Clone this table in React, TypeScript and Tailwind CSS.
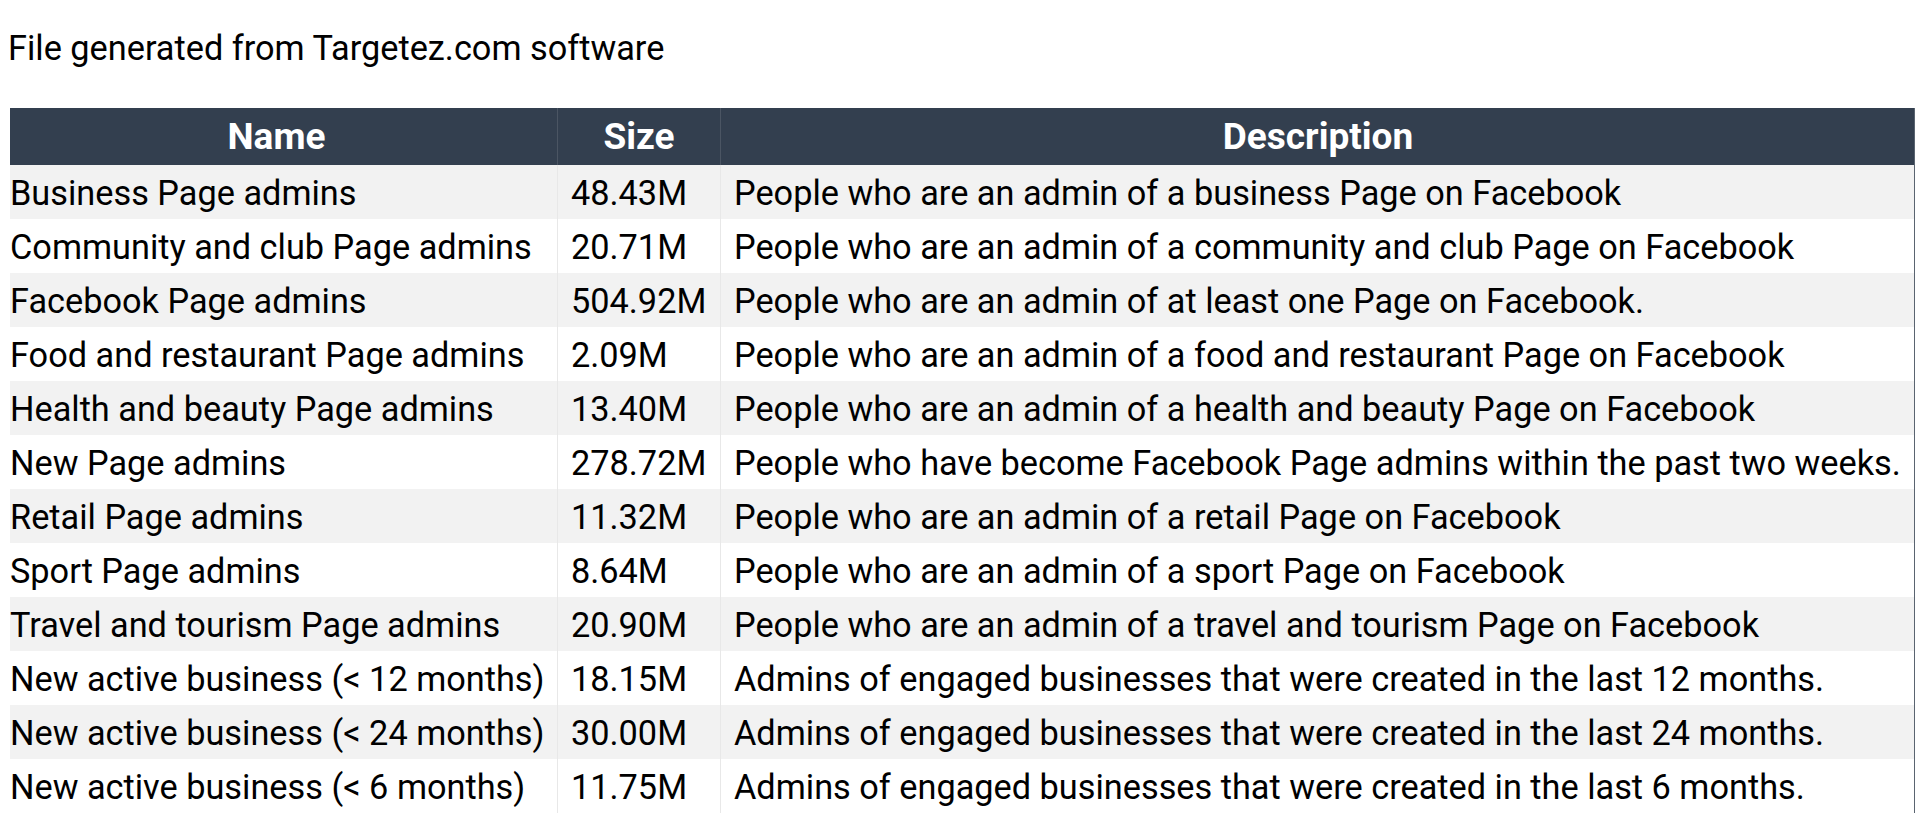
import React from 'react';

const rows: [string, string, string][] = [
  ['Business Page admins', '48.43M', 'People who are an admin of a business Page on Facebook'],
  ['Community and club Page admins', '20.71M', 'People who are an admin of a community and club Page on Facebook'],
  ['Facebook Page admins', '504.92M', 'People who are an admin of at least one Page on Facebook.'],
  ['Food and restaurant Page admins', '2.09M', 'People who are an admin of a food and restaurant Page on Facebook'],
  ['Health and beauty Page admins', '13.40M', 'People who are an admin of a health and beauty Page on Facebook'],
  ['New Page admins', '278.72M', 'People who have become Facebook Page admins within the past two weeks.'],
  ['Retail Page admins', '11.32M', 'People who are an admin of a retail Page on Facebook'],
  ['Sport Page admins', '8.64M', 'People who are an admin of a sport Page on Facebook'],
  ['Travel and tourism Page admins', '20.90M', 'People who are an admin of a travel and tourism Page on Facebook'],
  ['New active business (< 12 months)', '18.15M', 'Admins of engaged businesses that were created in the last 12 months.'],
  ['New active business (< 24 months)', '30.00M', 'Admins of engaged businesses that were created in the last 24 months.'],
  ['New active business (< 6 months)', '11.75M', 'Admins of engaged businesses that were created in the last 6 months.'],
];

export default function App() {
  return (
    <div className="min-h-screen bg-white font-['Roboto',sans-serif] text-black">
      <div className="px-[8px] pt-[26px] pb-[38px] text-[34.3px] leading-[44px] whitespace-nowrap">
        File generated from Targetez.com software
      </div>

      <div className="ml-[10px] w-[1905px] border-r border-[#5a6470]">
        <div className="grid grid-cols-[548px_163px_1194px] h-[57px] bg-[#333f4f] text-white font-bold text-[37px]">
          <div className="flex items-center justify-center pr-[14px] border-r border-[#4b5563]">Name</div>
          <div className="flex items-center justify-center border-r border-[#4b5563]">Size</div>
          <div className="flex items-center justify-center">Description</div>
        </div>

        {rows.map(([name, size, desc], i) => (
          <div
            key={name}
            className={`grid grid-cols-[548px_163px_1194px] h-[54px] text-[34.3px] ${
              i % 2 === 0 ? 'bg-[#f2f2f2]' : 'bg-white'
            }`}
          >
            <div className="flex items-center pt-[3px] whitespace-nowrap border-r border-[#e8e8e8]">{name}</div>
            <div className="flex items-center pt-[3px] pl-[13px] whitespace-nowrap border-r border-[#e8e8e8]">{size}</div>
            <div className="flex items-center pt-[3px] pl-[13px] whitespace-nowrap">{desc}</div>
          </div>
        ))}
      </div>
    </div>
  );
}
